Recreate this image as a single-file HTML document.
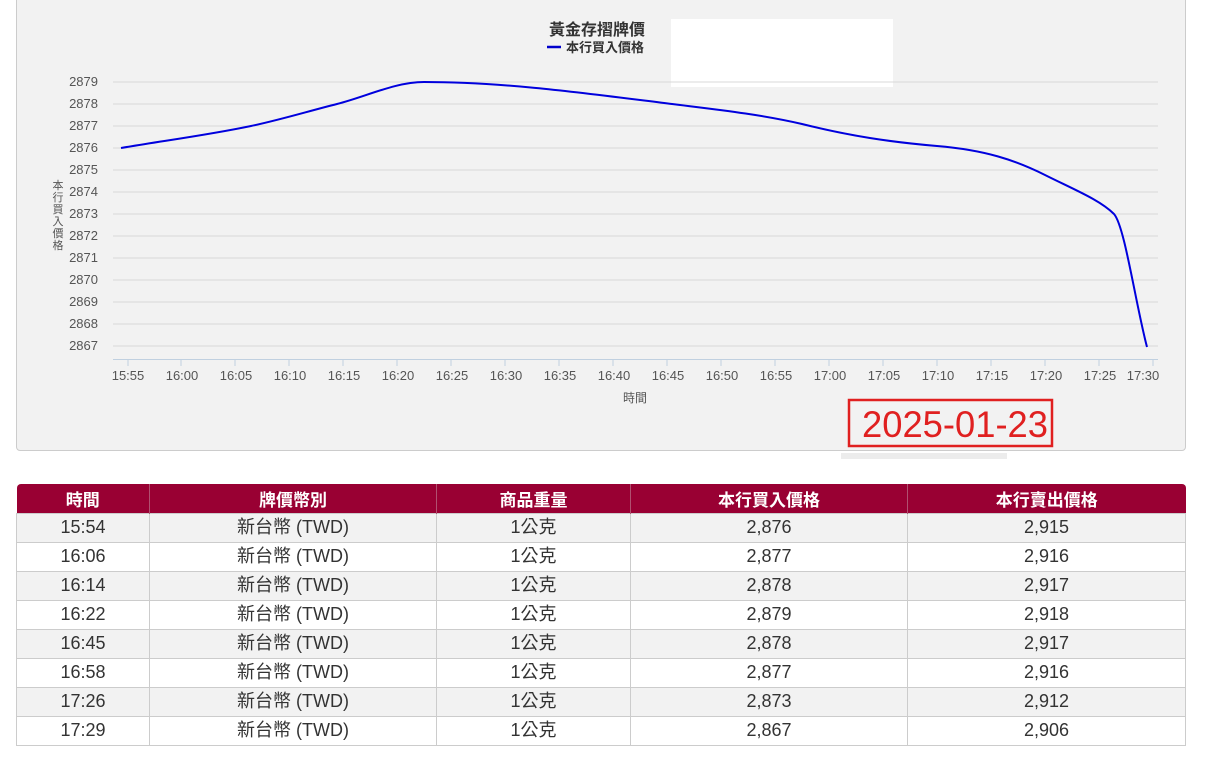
<!DOCTYPE html>
<html><head><meta charset="utf-8"><style>
*{margin:0;padding:0;box-sizing:border-box}
body{width:1210px;height:762px;background:#fff;font-family:"Liberation Sans","Noto Sans CJK TC",sans-serif;position:relative;overflow:hidden}
.panel{position:absolute;left:16px;top:-4px;width:1170px;height:455px;background:#f2f2f2;border:1px solid #ccc;border-radius:0 0 4px 4px}
table{position:absolute;left:16px;top:484px;width:1170px;border-collapse:collapse;font-size:18px;color:#333}
th{background:#990033;color:#fff;height:29px;font-weight:bold;font-size:17px;border-left:1px solid #b05070}
th:first-child{border-left:none;border-top-left-radius:4px}
th:last-child{border-top-right-radius:4px}
td{height:29px;text-align:center;border:1px solid #ccc;line-height:27px}
tr:nth-child(even) td{background:#f2f2f2}
</style></head><body>
<div class="panel"></div>
<svg style="position:absolute;left:0;top:0" width="1210" height="460">
<rect x="671" y="19" width="222" height="68" fill="#fff"/>
<text x="597" y="35" font-size="16" font-weight="bold" fill="#333" text-anchor="middle" font-family="Liberation Sans,Noto Sans CJK TC,sans-serif">黃金存摺牌價</text>
<line x1="547" y1="47" x2="561" y2="47" stroke="#0000cc" stroke-width="2.5"/>
<text x="566" y="52" font-size="13" font-weight="bold" fill="#333" font-family="Liberation Sans,Noto Sans CJK TC,sans-serif">本行買入價格</text>
<g stroke="#d8d8d8" stroke-width="1">
<line x1="113" y1="82" x2="1158" y2="82"/><line x1="113" y1="104" x2="1158" y2="104"/><line x1="113" y1="126" x2="1158" y2="126"/><line x1="113" y1="148" x2="1158" y2="148"/><line x1="113" y1="170" x2="1158" y2="170"/><line x1="113" y1="192" x2="1158" y2="192"/><line x1="113" y1="214" x2="1158" y2="214"/><line x1="113" y1="236" x2="1158" y2="236"/><line x1="113" y1="258" x2="1158" y2="258"/><line x1="113" y1="280" x2="1158" y2="280"/><line x1="113" y1="302" x2="1158" y2="302"/><line x1="113" y1="324" x2="1158" y2="324"/><line x1="113" y1="346" x2="1158" y2="346"/>
</g>
<line x1="113" y1="359.5" x2="1158" y2="359.5" stroke="#c0d0e0"/>
<g font-size="13" fill="#555" text-anchor="end" font-family="Liberation Sans,sans-serif">
<text x="98" y="86">2879</text><text x="98" y="108">2878</text><text x="98" y="130">2877</text><text x="98" y="152">2876</text><text x="98" y="174">2875</text><text x="98" y="196">2874</text><text x="98" y="218">2873</text><text x="98" y="240">2872</text><text x="98" y="262">2871</text><text x="98" y="284">2870</text><text x="98" y="306">2869</text><text x="98" y="328">2868</text><text x="98" y="350">2867</text>
</g>
<g font-size="11" fill="#555" text-anchor="middle" font-family="Liberation Sans,Noto Sans CJK TC,sans-serif">
<text x="58" y="189">本</text><text x="58" y="201">行</text><text x="58" y="213">買</text><text x="58" y="225">入</text><text x="58" y="237">價</text><text x="58" y="249">格</text>
</g>
<g stroke="#c0d0e0"><line x1="128" y1="360" x2="128" y2="366"/><line x1="181" y1="360" x2="181" y2="366"/><line x1="235" y1="360" x2="235" y2="366"/><line x1="289" y1="360" x2="289" y2="366"/><line x1="343" y1="360" x2="343" y2="366"/><line x1="397" y1="360" x2="397" y2="366"/><line x1="451" y1="360" x2="451" y2="366"/><line x1="505" y1="360" x2="505" y2="366"/><line x1="559" y1="360" x2="559" y2="366"/><line x1="613" y1="360" x2="613" y2="366"/><line x1="667" y1="360" x2="667" y2="366"/><line x1="721" y1="360" x2="721" y2="366"/><line x1="775" y1="360" x2="775" y2="366"/><line x1="829" y1="360" x2="829" y2="366"/><line x1="883" y1="360" x2="883" y2="366"/><line x1="937" y1="360" x2="937" y2="366"/><line x1="991" y1="360" x2="991" y2="366"/><line x1="1045" y1="360" x2="1045" y2="366"/><line x1="1099" y1="360" x2="1099" y2="366"/><line x1="1153" y1="360" x2="1153" y2="366"/></g>
<g font-size="13" fill="#555" text-anchor="middle" font-family="Liberation Sans,sans-serif">
<text x="128" y="380">15:55</text><text x="182" y="380">16:00</text><text x="236" y="380">16:05</text><text x="290" y="380">16:10</text><text x="344" y="380">16:15</text><text x="398" y="380">16:20</text><text x="452" y="380">16:25</text><text x="506" y="380">16:30</text><text x="560" y="380">16:35</text><text x="614" y="380">16:40</text><text x="668" y="380">16:45</text><text x="722" y="380">16:50</text><text x="776" y="380">16:55</text><text x="830" y="380">17:00</text><text x="884" y="380">17:05</text><text x="938" y="380">17:10</text><text x="992" y="380">17:15</text><text x="1046" y="380">17:20</text><text x="1100" y="380">17:25</text><text x="1143" y="380">17:30</text>
</g>
<text x="635" y="402" font-size="12" fill="#555" text-anchor="middle" font-family="Liberation Sans,Noto Sans CJK TC,sans-serif">時間</text>
<path d="M121,148 C164.3,140.6 207.7,135.1 251,126 C279.7,120 308.3,111.2 337,104 C366,96.75 395,82 424,82 C506.7,82 589.3,93.7 672,104 C715.3,109.4 758.7,114 802,124 C850,136 890,142 937,146 C985,150 1015,160 1045,175 C1075,190 1100,200 1114,214 C1124.7,226 1135.3,302.6 1147,347" fill="none" stroke="#0000dd" stroke-width="2"/>
<rect x="841" y="453" width="166" height="6" fill="#ececec"/>
<rect x="849" y="400" width="203" height="46" fill="#f2f2f2" stroke="#e02020" stroke-width="2.5"/>
<text x="955" y="437" font-size="37" fill="#e02020" text-anchor="middle" textLength="186" lengthAdjust="spacingAndGlyphs" font-family="Liberation Sans,sans-serif">2025-01-23</text>
</svg>
<table>
<tr><th style="width:133px">時間</th><th style="width:287px">牌價幣別</th><th style="width:194px">商品重量</th><th style="width:277px">本行買入價格</th><th>本行賣出價格</th></tr>
<tr><td>15:54</td><td>新台幣 (TWD)</td><td>1公克</td><td>2,876</td><td>2,915</td></tr>
<tr><td>16:06</td><td>新台幣 (TWD)</td><td>1公克</td><td>2,877</td><td>2,916</td></tr>
<tr><td>16:14</td><td>新台幣 (TWD)</td><td>1公克</td><td>2,878</td><td>2,917</td></tr>
<tr><td>16:22</td><td>新台幣 (TWD)</td><td>1公克</td><td>2,879</td><td>2,918</td></tr>
<tr><td>16:45</td><td>新台幣 (TWD)</td><td>1公克</td><td>2,878</td><td>2,917</td></tr>
<tr><td>16:58</td><td>新台幣 (TWD)</td><td>1公克</td><td>2,877</td><td>2,916</td></tr>
<tr><td>17:26</td><td>新台幣 (TWD)</td><td>1公克</td><td>2,873</td><td>2,912</td></tr>
<tr><td>17:29</td><td>新台幣 (TWD)</td><td>1公克</td><td>2,867</td><td>2,906</td></tr>
</table>
</body></html>
